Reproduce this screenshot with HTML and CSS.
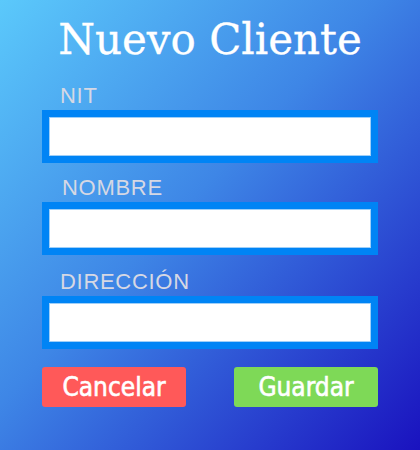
FILE: index.html
```html
<!DOCTYPE html>
<html lang="es">
<head>
<meta charset="utf-8">
<title>Nuevo Cliente</title>
<link rel="stylesheet" href="styles.css">
</head>
<body>
<main class="screen">
  <h1 class="title">Nuevo Cliente</h1>
  <form class="form">
    <label class="field">
      <span class="label">NIT</span>
      <input class="input" type="text">
    </label>
    <label class="field">
      <span class="label label-shift">NOMBRE</span>
      <input class="input" type="text">
    </label>
    <label class="field field-last">
      <span class="label">DIRECCIÓN</span>
      <input class="input" type="text">
    </label>
    <div class="actions">
      <button type="button" class="btn btn-cancel">Cancelar</button>
      <button type="button" class="btn btn-save">Guardar</button>
    </div>
  </form>
</main>
</body>
</html>
```
FILE: styles.css
```css
html, body {
  margin: 0;
  padding: 0;
}
.screen {
  width: 420px;
  height: 450px;
  box-sizing: border-box;
  background: linear-gradient(to bottom right, #5bc9fb 0%, #3e86e6 45%, #1a12bf 100%);
  display: flex;
  flex-direction: column;
  align-items: center;
  padding-top: 16px;
  font-family: "Liberation Sans", Arial, sans-serif;
  overflow: hidden;
}
.title {
  margin: 0;
  font-family: "DejaVu Serif", serif;
  font-weight: normal;
  font-size: 42px;
  line-height: 48px;
  color: #ffffff;
  -webkit-text-stroke: 0.3px #ffffff;
}
.form {
  width: 336px;
  display: flex;
  flex-direction: column;
  margin-top: 21px;
}
.field {
  display: flex;
  flex-direction: column;
  margin-bottom: 14px;
}
.field-last {
  margin-top: 2px;
  margin-bottom: 18px;
}
.label {
  color: #d6d8e4;
  font-size: 22px;
  line-height: 22px;
  letter-spacing: 0.7px;
  padding-left: 18px;
  margin-bottom: 3px;
}
.label-shift {
  padding-left: 20px;
}
.input {
  box-sizing: border-box;
  height: 53px;
  border: 7px solid #0084f5;
  border-top-width: 8px;
  outline: 1px solid #9fcff8;
  outline-offset: -8px;
  background: #ffffff;
  margin: 0;
  padding: 0;
}
.actions {
  display: flex;
  justify-content: space-between;
}
.btn {
  width: 144px;
  height: 40px;
  border: none;
  border-radius: 3px;
  color: #ffffff;
  font-family: "DejaVu Sans Condensed", "DejaVu Sans", sans-serif;
  font-weight: normal;
  font-size: 26px;
  line-height: 40px;
  -webkit-text-stroke: 0.6px #ffffff;
  padding: 0;
  cursor: pointer;
}
.btn-cancel {
  background: #ff5959;
}
.btn-save {
  background: #7ed957;
}
```
